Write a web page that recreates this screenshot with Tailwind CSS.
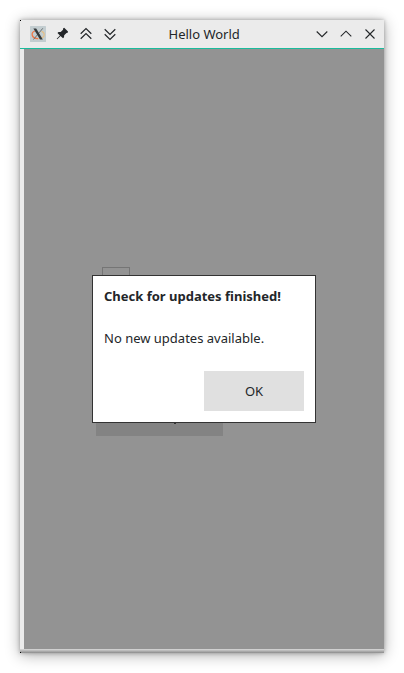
<!DOCTYPE html>
<html lang="en">
<head>
<meta charset="utf-8">
<title>Hello World</title>
<script src="https://cdn.jsdelivr.net/npm/@tailwindcss/browser@4"></script>
</head>
<body class="h-[673px] w-[404px] overflow-hidden bg-white p-5 font-['Noto_Sans',sans-serif] text-[13px] text-[#232629]">
<main class="flex h-[633px] w-[364px] flex-col bg-[#ebebeb] shadow-[0_2px_14px_rgba(0,0,0,0.32),0_0_4px_rgba(0,0,0,0.3)]">
  <header class="relative flex h-[29px] shrink-0 items-center border-b border-[#1abc9c] bg-[#ebebeb]">
    <!-- application icon -->
    <svg class="ml-[10px] h-4 w-4" viewBox="0 0 16 16" fill="none">
      <rect width="16" height="16" rx="0.500" fill="#c3cdd0"/>
      <path d="M5 5C3 5.600 1.900 7.200 2.200 9c.5 2.300 3 3.700 6 3.500" stroke="#f07848" stroke-width="1.300"/>
      <path d="M8.500 12.500c3.500-.2 5.700-2 5.700-4 0-1.500-1-2.700-2.700-3.200" stroke="#e5bf88" stroke-width="1.200"/>
      <path d="M12.800 2.300 3.500 13.500" stroke="#6a7072" stroke-width="1"/>
      <path d="M3.400 2.500h2.800l6.600 11H10z" fill="#34393b"/>
    </svg>
    <!-- pin -->
    <svg class="ml-2 h-4 w-4" viewBox="0 0 16 16">
      <path d="M10.200 1.800 14 5.600 13.700 6.800 12.500 7 10.200 9.300 10 11.300 9 12.200 6.500 10 3.300 13.200 2.700 12.700 5.900 9.400 3.500 7.100 4.500 6.100 6.700 6 9 3.700 9.200 2.300z" fill="#232629"/>
    </svg>
    <svg class="ml-2 h-4 w-4" viewBox="0 0 16 16" fill="none" stroke="#232629" stroke-width="1.200">
      <path d="M2.700 7.700 8 2.500 13.300 7.700M2.700 12.700 8 7.500 13.300 12.700"/>
    </svg>
    <svg class="ml-2 h-4 w-4" viewBox="0 0 16 16" fill="none" stroke="#232629" stroke-width="1.200">
      <path d="M2.700 3.300 8 8.500 13.300 3.300M2.700 8.300 8 13.500 13.300 8.300"/>
    </svg>
    <h1 class="ml-[50.5px] w-[72px] whitespace-nowrap leading-[18px]">Hello World</h1>
    <div class="ml-auto mr-[6px] flex gap-2">
      <svg class="h-4 w-4" viewBox="0 0 16 16" fill="none" stroke="#232629" stroke-width="1.100"><path d="M2.700 5.500 8 10.700 13.300 5.500"/></svg>
      <svg class="h-4 w-4" viewBox="0 0 16 16" fill="none" stroke="#232629" stroke-width="1.100"><path d="M2.700 10.400 8 5.200 13.300 10.400"/></svg>
      <svg class="h-4 w-4" viewBox="0 0 16 16" fill="none" stroke="#232629" stroke-width="1.100"><path d="m3.500 3.500 9 9m0-9-9 9"/></svg>
    </div>
    <span class="absolute left-0 top-0 h-px w-px bg-black"></span>
  </header>
  <section class="relative ml-1 h-[600px] bg-[#939393]">
    <div class="absolute left-[78px] top-[218px] h-7 w-7 border border-[#757575]"></div>
    <div class="absolute left-[72px] top-[347px] h-10 w-[127px] bg-[#838383]"></div>
    <div class="absolute left-[150px] top-[374px] h-px w-[2px] bg-[#333]"></div>
    <div role="dialog" class="absolute left-[68px] top-[226px] flex h-[148px] w-56 flex-col border border-[#333] bg-white px-[11px] pb-[11px] pt-[11px]">
      <h2 class="whitespace-nowrap font-bold leading-[18px]">Check for updates finished!</h2>
      <p class="mt-6 whitespace-nowrap leading-[18px]">No new updates available.</p>
      <button class="ml-auto mt-auto h-10 w-[100px] bg-[#e0e0e0] pt-[2px]">OK</button>
    </div>
  </section>
  <footer class="relative h-1 bg-linear-to-b from-[#dadada] to-[#8c8c8c]">
    <span class="absolute bottom-0 left-0 h-px w-px bg-black"></span>
  </footer>
</main>
</body>
</html>
